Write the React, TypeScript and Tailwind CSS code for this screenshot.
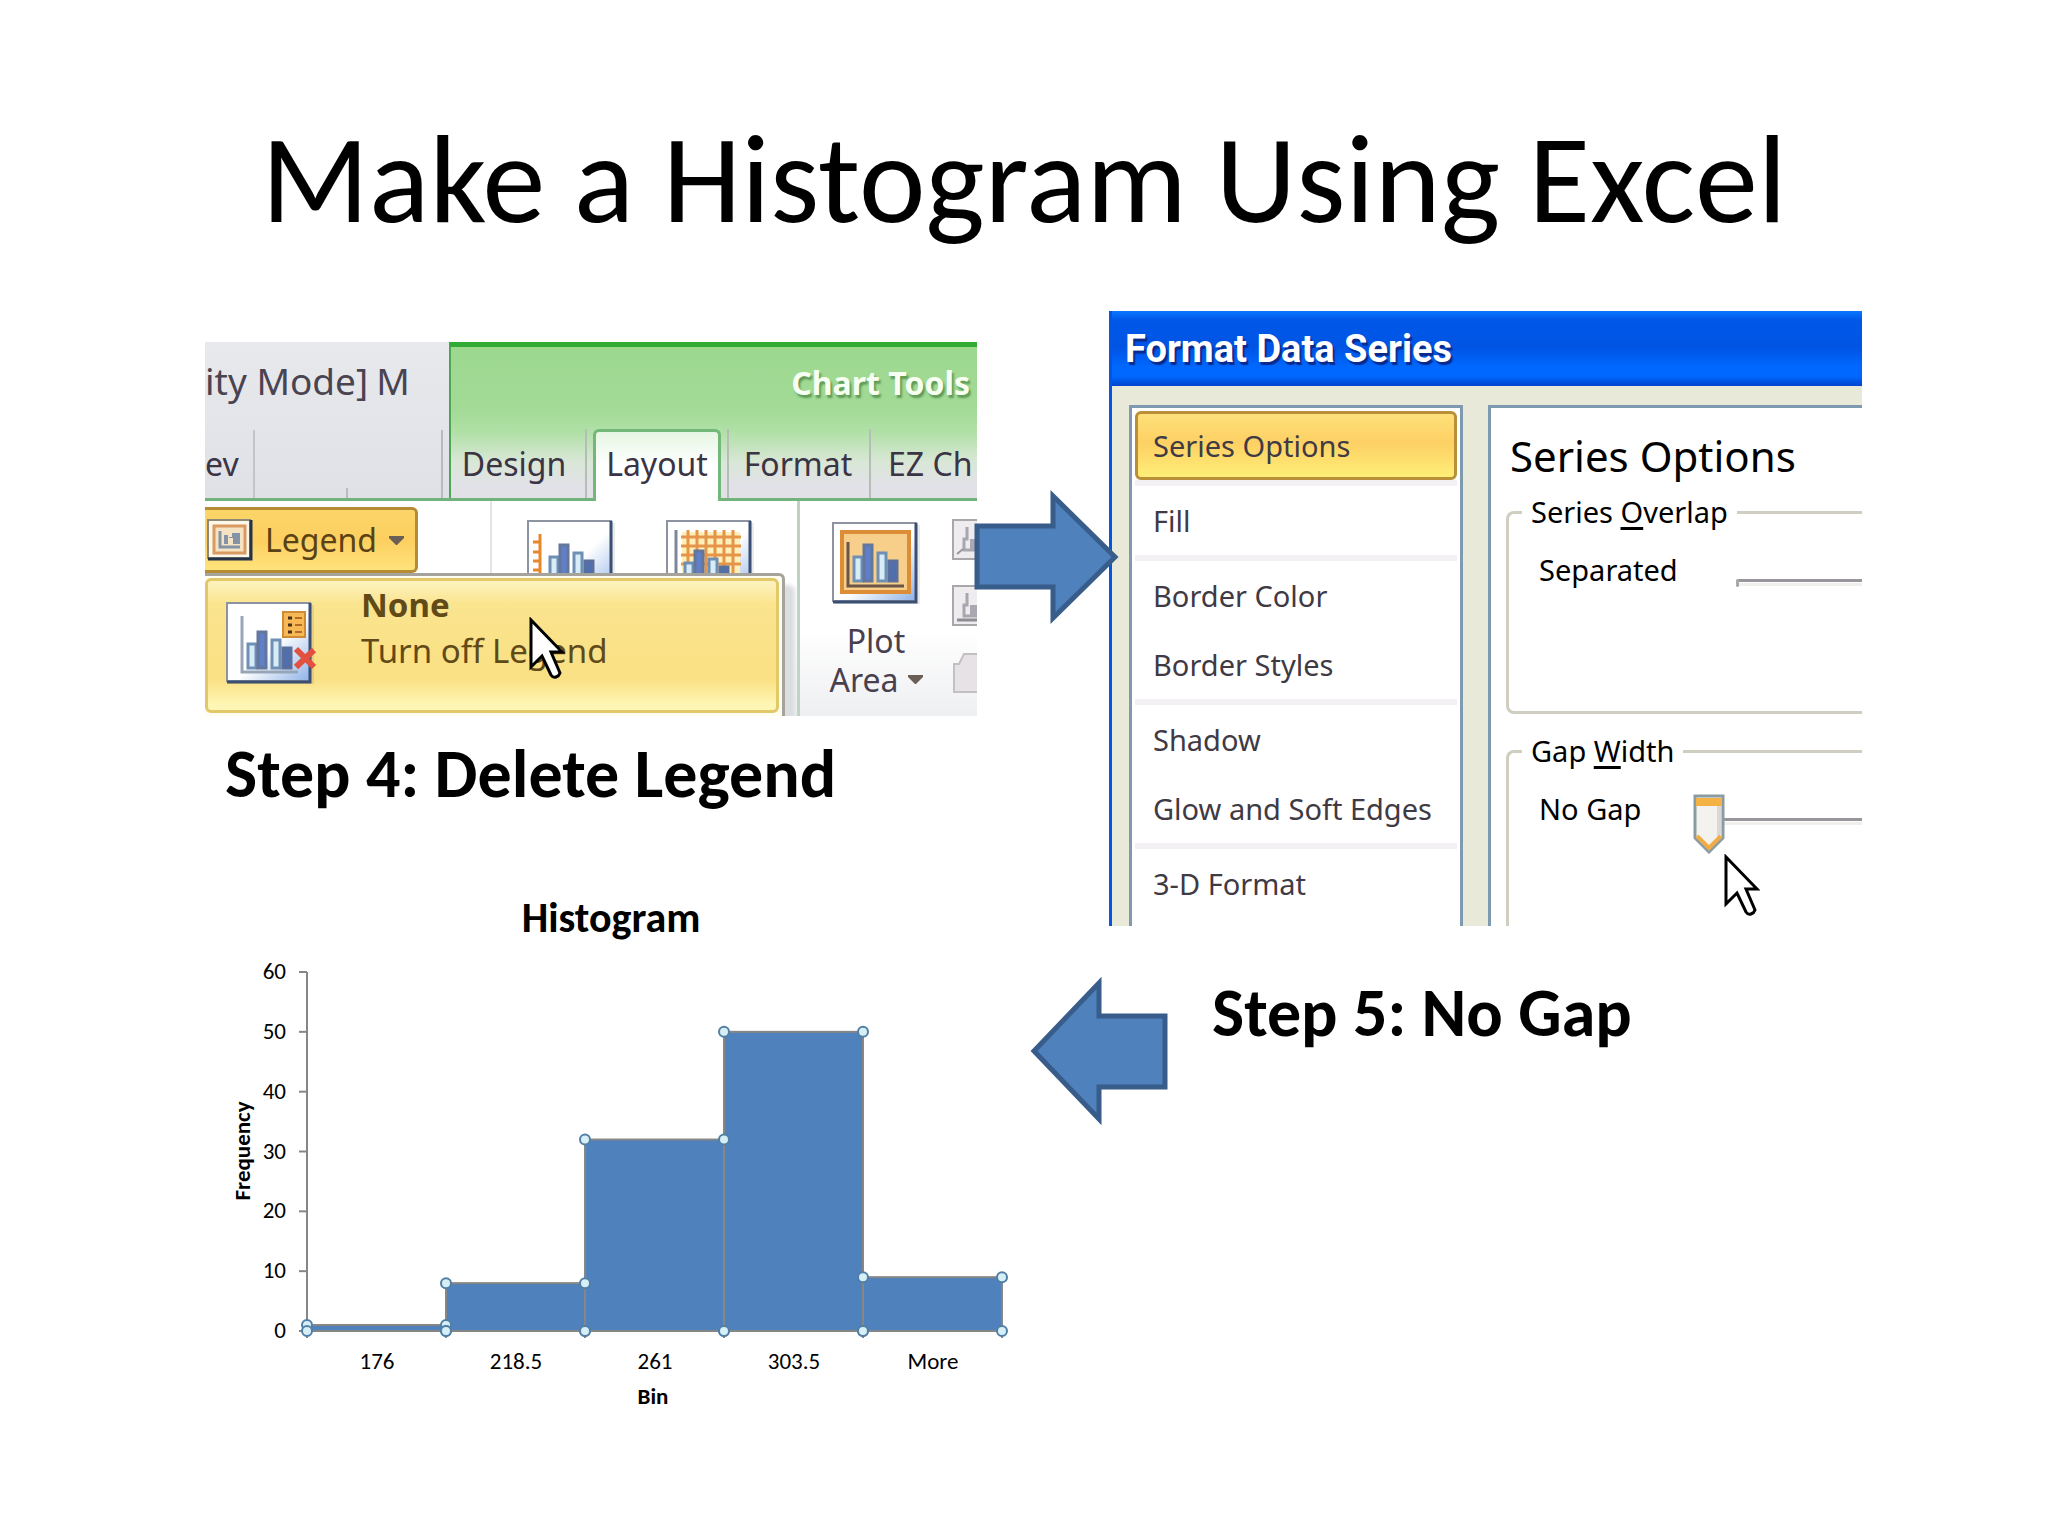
import React from "react";

const CAPTION = "font-[Carlito,Calibri,Lato,sans-serif]";

function Bars({ x, y }: { x: number; y: number }) {
  return (
    <g strokeWidth="3">
      <path d={`M${x} ${y}h8v-24h-8z`} fill="#d8ecf8" stroke="#6f8fb5" />
      <path d={`M${x + 10} ${y}h8v-36h-8z`} fill="#5f80c8" stroke="#64769c" />
      <path d={`M${x + 24} ${y}h8v-28h-8z`} fill="#d8ecf8" stroke="#6f8fb5" />
      <path d={`M${x + 35} ${y}h8v-20h-8z`} fill="#4f6fae" stroke="#5b6f9c" />
    </g>
  );
}

function IconFrame({ children, id }: { children: React.ReactNode; id: string }) {
  return (
    <svg width="88" height="82" viewBox="0 0 88 82" aria-hidden="true" className="shrink-0">
      <defs>
        <linearGradient id={id} x1="0" y1="0" x2="1" y2="1">
          <stop offset="0.55" stopColor="#ffffff" />
          <stop offset="1" stopColor="#8fb2e6" />
        </linearGradient>
      </defs>
      <rect x="3" y="3" width="85" height="79" fill="#000" opacity="0.08" />
      <rect x="1" y="1" width="83" height="78" fill={`url(#${id})`} stroke="#8d93a0" strokeWidth="2" />
      <path d="M84 1v79H1" fill="none" stroke="#3b4f75" strokeWidth="3" />
      {children}
    </svg>
  );
}

function AxesIcon() {
  return (
    <IconFrame id="axes">
      <path d="M13 14v66M6 22h7M6 32h7M6 41h7M6 50h7M6 60h7" stroke="#e8862c" strokeWidth="3" fill="none" />
      <Bars x={23} y={61} />
    </IconFrame>
  );
}

function GridIcon() {
  return (
    <IconFrame id="grid">
      <rect x="16" y="12" width="58" height="52" fill="#fff0b8" />
      <path
        d="M22 10v52M31 10v52M40 10v52M49 10v52M58 10v52M67 10v52M15 17h60M15 26h60M15 35h60M15 44h60"
        stroke="#e5944a"
        strokeWidth="3"
        fill="none"
      />
      <path d="M10 10v66" stroke="#7e8795" strokeWidth="3" />
      <Bars x={19} y={67} />
    </IconFrame>
  );
}

function PlotAreaIcon() {
  return (
    <IconFrame id="plot">
      <rect x="10" y="10" width="67" height="60" fill="#f8cf8a" stroke="#dc8d35" strokeWidth="4" />
      <path d="M16 20v44h56" fill="none" stroke="#6b5548" strokeWidth="3" />
      <Bars x={22} y={59} />
    </IconFrame>
  );
}

function NoLegendIcon() {
  return (
    <div className="relative shrink-0">
      <IconFrame id="nolegend">
        <path d="M16 14v56h56" fill="none" stroke="#97a5b8" strokeWidth="3" />
        <Bars x={22} y={66} />
        <rect x="57" y="10" width="22" height="25" fill="#f7b955" stroke="#cf8c35" strokeWidth="2" />
        <path d="M69 16h7M69 23h7M69 30h7" stroke="#b06b24" strokeWidth="2" />
        <path d="M62 16h4M62 23h4M62 30h4" stroke="#4a3020" strokeWidth="3" />
      </IconFrame>
      <svg width="24" height="24" viewBox="0 0 24 24" className="absolute right-[-3px] bottom-[14px]" aria-hidden="true">
        <path d="M3 3l18 18M21 4L3 21" stroke="#e2513f" strokeWidth="6" fill="none" />
      </svg>
    </div>
  );
}

function LegendIcon() {
  return (
    <svg width="46" height="42" viewBox="0 0 46 42" aria-hidden="true" className="shrink-0">
      <rect x="1" y="1" width="42" height="38" fill="#fdf7e8" stroke="#8d8878" strokeWidth="2" />
      <path d="M44 1v39H1" fill="none" stroke="#263246" strokeWidth="3" />
      <rect x="7" y="7" width="31" height="27" fill="#f6e3c4" stroke="#d99a62" strokeWidth="3" />
      <path d="M13 12v16h20" fill="none" stroke="#8493a5" strokeWidth="3" />
      <path d="M17 16h4v9h-4zM22 18h3v-4h8v11h-7v-6h-4z" fill="#8493a5" />
    </svg>
  );
}

function DimIcon({ kind }: { kind: "wall" | "floor" | "box" }) {
  return (
    <svg width="26" height="42" viewBox="0 0 26 42" aria-hidden="true">
      {kind === "box" ? (
        <path d="M2 41V13h5l5-10h14v38z" fill="#e6e2e6" stroke="#c3c0c4" strokeWidth="2" />
      ) : (
        <>
          <path d="M26 1H1v39h25" fill="#efecef" stroke="#aaa7ab" strokeWidth="2" />
          <path d="M15 8v12h-3v11h14" fill="none" stroke="#a9a6ad" strokeWidth="3" />
          <path d="M18 31V20h8v11z" fill="#aaa8b2" />
          {kind === "wall" ? (
            <path d="M5 35l6-5" stroke="#9a979c" strokeWidth="2" />
          ) : (
            <path d="M5 35h21" stroke="#8f8c92" strokeWidth="3" />
          )}
        </>
      )}
    </svg>
  );
}

function Caret() {
  return (
    <svg width="15" height="9" viewBox="0 0 15 9" aria-hidden="true">
      <path d="M0 0h15v2L8 9H7L0 2z" fill="#6b5f55" />
    </svg>
  );
}

function Cursor({ className }: { className: string }) {
  return (
    <svg width="36" height="64" viewBox="0 0 36 64" aria-hidden="true" className={className}>
      <path
        d="M2 3v47l11-11 9 19q2 3 5 2t4-4l-9-21h11z"
        fill="#fff"
        stroke="#000"
        strokeWidth="3"
        strokeLinejoin="miter"
      />
    </svg>
  );
}

function Ribbon() {
  const tab = "flex shrink-0 items-center justify-center text-[32px] leading-[44px] text-[#3a3444]";
  return (
    <section
      aria-label="Ribbon"
      className="relative overflow-hidden bg-white font-['Noto_Sans',sans-serif] whitespace-nowrap"
    >
      <div className="flex border-b-3 border-[#74b27c]">
        <div className="flex w-[244px] shrink-0 flex-col bg-linear-to-b from-[#e8e9ec] to-[#e0e1e7]">
          <div className="flex h-[88px] items-center gap-[8px] pb-[11px] text-[37px] leading-[44px] text-[#4a4450]">
            <span>ity Mode]</span>
            <span>M</span>
          </div>
          <div className="flex h-[68px]">
            <button className={`${tab} w-[50px] justify-start border-r-2 border-[#c3c4ca]`}>ev</button>
            <div className="mt-auto h-[10px] w-[93px] border-r-2 border-[#b9bac0]" />
            <div className="w-[95px] border-r-2 border-[#b9bac0]" />
          </div>
        </div>
        <div className="flex min-w-0 flex-1 flex-col border-t-5 border-l-2 border-t-[#31ab33] border-l-[#4fa556] bg-[linear-gradient(#9dd88f_0%,#a2da96_40%,#b0e0a6_56%,#d9e7d6_76%,#e2e1e8_92%)]">
          <div className="flex h-[82px] items-center justify-end pr-[7px] pb-[10px] text-[32px] leading-[44px] font-bold text-[#f7fff2] [text-shadow:2px_3px_2px_#5f9a58]">
            Chart Tools
          </div>
          <div className="flex h-[69px]">
            <button className={`${tab} w-[136px] border-r-2 border-[#b4bdb6] pr-[8px]`}>Design</button>
            <button
              className={`${tab} mx-[6px] -mb-[3px] w-[128px] rounded-t-md border-3 border-b-0 border-[#72b878] bg-linear-to-b from-[#e6f6e4] to-white to-50% pb-[5px]`}
            >
              Layout
            </button>
            <button className={`${tab} w-[144px] border-r-2 border-l-2 border-[#b4bdb6] pr-[2px]`}>Format</button>
            <button className={`${tab} pl-[17px]`}>EZ Ch</button>
          </div>
        </div>
      </div>

      <div className="flex h-[215px] bg-linear-to-b from-white from-60% to-[#eeeff1]">
        <div className="flex w-[287px] shrink-0 items-start border-r-2 border-[#e2e4e6] pt-[6px]">
          <button className="flex h-[66px] w-[213px] items-center gap-[12px] rounded-r-md border-3 border-l-0 border-[#b58b33] bg-linear-to-b from-[#fbd568] via-[#fdcf60] to-[#fee37b] pl-[2px] text-[32px] leading-[44px] text-[#5a4214]">
            <LegendIcon />
            Legend
            <Caret />
          </button>
        </div>
        <div className="flex min-w-0 flex-1 items-start">
          <div className="flex h-full w-[308px] shrink-0 gap-[51px] border-r-3 border-[#bfd2c2] pt-[19px] pl-[35px]">
            <AxesIcon />
            <GridIcon />
          </div>
          <button className="flex w-[152px] shrink-0 flex-col items-center pt-[21px] text-[32px] leading-[39px] text-[#4a3f4e]">
            <PlotAreaIcon />
            <span className="pt-[17px]">Plot</span>
            <span className="flex items-center gap-[9px]">
              Area <Caret />
            </span>
          </button>
          <div className="flex flex-col gap-[24px] pt-[18px]">
            <DimIcon kind="wall" />
            <DimIcon kind="floor" />
            <DimIcon kind="box" />
          </div>
        </div>
      </div>

      <div
        role="menu"
        className="absolute bottom-0 left-0 h-[143px] w-[580px] rounded-tr-md border-t-3 border-r-3 border-[#a5a39c] bg-[#fffdf0] pt-[2px] pr-[3px] shadow-[10px_12px_4px_#dcdde0]"
      >
        <button
          role="menuitem"
          className="relative flex h-[135px] w-full items-start gap-[22px] rounded-md border-3 border-[#e2c869] bg-[linear-gradient(#fdf3c0_0%,#fae48e_18%,#fae084_76%,#fdf6b4_96%)] pt-[21px] pl-[18px] text-left text-[33px] text-[#5f4a18]"
        >
          <NoLegendIcon />
          <span className="-mt-[20px] flex flex-col pl-[25px] leading-[46px]">
            <b>None</b>
            <span>Turn off Legend</span>
          </span>
          <Cursor className="absolute top-[36px] left-[321px]" />
        </button>
      </div>
    </section>
  );
}

function Divider() {
  return <hr className="h-[6px] border-0 bg-[#f4f1f4]" />;
}

const groups = [["Fill"], ["Border Color", "Border Styles"], ["Shadow", "Glow and Soft Edges"], ["3-D Format"]];

function Dialog() {
  const box = "h-[222px] rounded-l-lg border-3 border-r-0 border-[#cfcec0] pl-[13px]";
  const legend = "px-[9px] text-[29px] leading-[40px]";
  const row = "relative flex h-[76px] items-center pl-[17px] text-[29px] leading-[40px]";
  const range =
    "mt-[21px] h-[3px] min-w-0 flex-1 appearance-none bg-[#98969a] shadow-[0_4px_0_#f1efec] [&::-webkit-slider-thumb]:appearance-none [&::-webkit-slider-thumb]:opacity-0";
  return (
    <section
      aria-label="Format Data Series"
      className="overflow-hidden border-l-3 border-[#0855dd] bg-[#e8e9d9] font-['Noto_Sans',sans-serif]"
    >
      <header className="flex h-[75px] items-center bg-[linear-gradient(#0a78ff_0%,#0058e8_12%,#0054e4_48%,#0068ff_75%,#0066fc_88%,#0044cc_100%)] pl-[13px] font-[Roboto,sans-serif] text-[38px] leading-[48px] font-bold text-white [text-shadow:2px_3px_1px_#0a2a8c]">
        Format Data Series
      </header>
      <div className="flex h-[540px] pt-[19px]">
        <nav className="ml-[17px] w-[334px] shrink-0 border-3 border-b-0 border-[#7f9aae] bg-white px-[3px] pt-[3px] text-[29px] leading-[40px] text-[#3f3a44]">
          <button className="flex h-[69px] w-full items-center rounded-md border-3 border-[#b98f37] bg-[linear-gradient(#fee07a_0%,#fdd064_45%,#feee78_100%)] pl-[15px]">
            Series Options
          </button>
          {groups.map((items) => (
            <React.Fragment key={items[0]}>
              <Divider />
              {items.map((t) => (
                <button key={t} className="flex h-[69px] w-full items-center pl-[18px]">
                  {t}
                </button>
              ))}
            </React.Fragment>
          ))}
        </nav>
        <div className="ml-[25px] min-w-0 flex-1 border-t-3 border-l-3 border-[#7f9aae] bg-white pt-[20px] pl-[15px] text-black">
          <h3 className="pl-[4px] text-[42px] leading-[56px]">Series Options</h3>
          <fieldset className={`${box} mt-[8px]`}>
            <legend className={legend}>
              Series <u className="decoration-3 underline-offset-4">O</u>verlap
            </legend>
            <div className={row}>
              <label htmlFor="overlap" className="w-[199px] shrink-0">
                Separated
              </label>
              <input id="overlap" type="range" className={range} />
              <span className="absolute top-[47px] left-[214px] h-[8px] w-[3px] rounded-full bg-[#aaa8a8]" />
            </div>
          </fieldset>
          <fieldset className={`${box} mt-[17px] border-b-0`}>
            <legend className={legend}>
              Gap <u className="decoration-3 underline-offset-4">W</u>idth
            </legend>
            <div className={row}>
              <label htmlFor="gap" className="w-[160px] shrink-0">
                No Gap
              </label>
              <input id="gap" type="range" defaultValue={0} className={range} />
              <svg
                width="32"
                height="60"
                viewBox="0 0 32 60"
                aria-hidden="true"
                className="pointer-events-none absolute top-[23px] left-[171px]"
              >
                <path d="M2 2h28v42L16 58 2 44z" fill="#f3f2ee" stroke="#8b9ba3" strokeWidth="3" />
                <path d="M24 12h4v28l-4 4z" fill="#d9d8d2" />
                <path d="M3 4h26v8H3z" fill="#f5b244" />
                <path d="M4 42l12 12 12-12" fill="none" stroke="#f0ac45" strokeWidth="4" />
              </svg>
              <Cursor className="absolute top-[83px] left-[202px]" />
            </div>
          </fieldset>
        </div>
      </div>
    </section>
  );
}

const X0 = 307;
const Y0 = 1331;
const BAR = 139;
const UNIT = 359 / 60;
const data = [
  { bin: "176", n: 1 },
  { bin: "218.5", n: 8 },
  { bin: "261", n: 32 },
  { bin: "303.5", n: 50 },
  { bin: "More", n: 9 },
];

function Histogram() {
  return (
    <svg
      viewBox="205 890 772 530"
      className={`${CAPTION} block w-full overflow-visible text-[23px]`}
      role="img"
      aria-label="Histogram"
    >
      <text x="611" y="932" textAnchor="middle" className="text-[42px] font-bold">
        Histogram
      </text>
      {[0, 10, 20, 30, 40, 50, 60].map((v) => (
        <g key={v}>
          <path d={`M299 ${Y0 - v * UNIT}h8`} stroke="#868686" strokeWidth="2" />
          <text x="286" y={Y0 - v * UNIT + 7} textAnchor="end">
            {v}
          </text>
        </g>
      ))}
      <path d={`M${X0} ${Y0 + 7}V${Y0 - 60 * UNIT}`} stroke="#868686" strokeWidth="2" />
      {data.map((d, i) => (
        <g key={d.bin}>
          <rect
            x={X0 + i * BAR}
            y={Y0 - d.n * UNIT}
            width={BAR}
            height={d.n * UNIT}
            fill="#4f81bd"
            stroke="#868686"
            strokeWidth="2"
          />
          <path d={`M${X0 + (i + 1) * BAR} ${Y0}v7`} stroke="#868686" strokeWidth="2" />
          <text x={X0 + i * BAR + 70} y="1369" textAnchor="middle">
            {d.bin}
          </text>
        </g>
      ))}
      {data.map((d, i) =>
        [
          [i, d.n],
          [i + 1, d.n],
          [i, 0],
          [i + 1, 0],
        ].map(([c, n]) => (
          <circle
            key={`${i}-${c}-${n}`}
            cx={X0 + c * BAR}
            cy={Y0 - n * UNIT}
            r="5"
            fill="#d6eef5"
            stroke="#527fa6"
            strokeWidth="2"
          />
        )),
      )}
      <text x="653" y="1404" textAnchor="middle" className="font-bold">
        Bin
      </text>
      <text transform="translate(250 1151) rotate(-90)" textAnchor="middle" className="font-bold">
        Frequency
      </text>
    </svg>
  );
}

export default function App() {
  return (
    <main className="min-h-screen bg-white pt-[99px] text-black">
      <h1 className={`${CAPTION} h-[212px] text-center text-[126px] leading-[160px] whitespace-nowrap`}>
        Make a Histogram Using Excel
      </h1>
      <div className="grid grid-cols-[minmax(0,772fr)_132px_minmax(0,753fr)] pr-[186px] pl-[205px]">
        <div className="pt-[31px]">
          <Ribbon />
          <h2 className={`${CAPTION} pt-[18px] pb-[76px] pl-[20px] text-[68px] leading-[80px] font-bold whitespace-nowrap`}>
            Step 4: Delete Legend
          </h2>
          <Histogram />
        </div>
        <div className="z-10 pt-[179px]">
          <svg
            width="144"
            height="134"
            viewBox="0 0 144 134"
            aria-hidden="true"
            className="-ml-[2px] max-w-none overflow-visible"
          >
            <path d="M2 36h76V6l62 61-62 61V97H2z" fill="#4f81bd" stroke="#385d8a" strokeWidth="5" />
          </svg>
          <svg
            width="138"
            height="148"
            viewBox="0 0 138 148"
            aria-hidden="true"
            className="mt-[353px] ml-[53px] max-w-none overflow-visible"
          >
            <path d="M135 39H69V6L4 74l65 68v-32h66z" fill="#4f81bd" stroke="#385d8a" strokeWidth="5" />
          </svg>
        </div>
        <div>
          <Dialog />
          <h2 className={`${CAPTION} pt-[47px] pl-[103px] text-[68px] leading-[80px] font-bold whitespace-nowrap`}>
            Step 5: No Gap
          </h2>
        </div>
      </div>
    </main>
  );
}
